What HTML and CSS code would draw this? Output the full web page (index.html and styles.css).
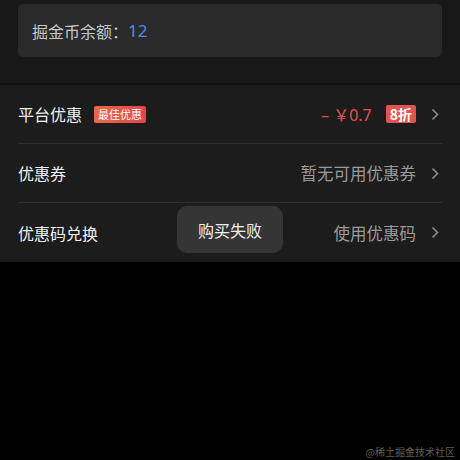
FILE: index.html
```html
<!DOCTYPE html>
<html>
  <head>
    <title>支付</title>
    <link rel="stylesheet" href="styles.css">
  </head>
  <body>

    <div class="balance-wrap">
      <div class="balance">掘金币余额：<span class="coin">12</span></div>
    </div>

    <div class="list">
      <div class="row">
        <span class="label">平台优惠</span>
        <span class="best">最佳优惠</span>
        <span class="value red">– ￥0.7</span>
        <span class="off">8折</span>
        <svg class="arrow" width="8" height="13" viewBox="0 0 8 13"><path d="M1.5 1.5 L6.5 6.5 L1.5 11.5" fill="none" stroke="#8b8b94" stroke-width="1.6"/></svg>
      </div>
      <div class="row">
        <span class="label">优惠券</span>
        <span class="value">暂无可用优惠券</span>
        <svg class="arrow" width="8" height="13" viewBox="0 0 8 13"><path d="M1.5 1.5 L6.5 6.5 L1.5 11.5" fill="none" stroke="#8b8b94" stroke-width="1.6"/></svg>
      </div>
      <div class="row">
        <span class="label">优惠码兑换</span>
        <span class="value">使用优惠码</span>
        <svg class="arrow" width="8" height="13" viewBox="0 0 8 13"><path d="M1.5 1.5 L6.5 6.5 L1.5 11.5" fill="none" stroke="#8b8b94" stroke-width="1.6"/></svg>
      </div>
    </div>

    <div class="toast">购买失败</div>
    <div class="mark">@稀土掘金技术社区</div>

  </body>
</html>
```

FILE: styles.css
```css
body {
  margin: 0;
  background-color: black;
  color: #e8e8e8;
  font-family: "Noto Sans CJK SC", "Noto Sans", sans-serif;
  width: 460px;
  height: 460px;
  position: relative;
  overflow: hidden;
}

.balance-wrap {
  background-color: #181818;
  padding: 4px 18px 26px 18px;
  border-bottom: 2px solid #121212;
}

.balance {
  background-color: #2a2a2a;
  border-radius: 5px;
  height: 53px;
  padding-left: 14px;
  display: flex;
  align-items: center;
  font-size: 16px;
  color: #c8c8c8;
}

.coin {
  color: #4d8ae6;
  font-family: "Noto Sans", sans-serif;
  font-size: 17px;
}

.list {
  background-color: #1c1c1c;
  padding: 0 18px;
}

.row {
  height: 58px;
  display: flex;
  align-items: center;
  border-bottom: 1px solid #2e2e2e;
  font-size: 16px;
}

.row:last-child {
  border-bottom: none;
  height: 59px;
}

.label {
  color: #f0f0f0;
}

.best {
  margin-left: 12px;
  font-size: 11px;
  color: white;
  padding: 0 4px;
  line-height: 17px;
  border-radius: 2px;
  background: linear-gradient(90deg, #ea6a4a, #e2454a);
}

.value {
  margin-left: auto;
  color: #9a9a9a;
  font-size: 16.5px;
}

.red {
  color: #e5524d;
  font-family: "Noto Sans", "Noto Sans CJK SC", sans-serif;
  font-size: 16px;
}

.off {
  margin-left: 14px;
  background-color: #e2544f;
  color: white;
  font-size: 14px;
  font-weight: bold;
  line-height: 18px;
  padding: 0 4px;
  border-radius: 2px;
}

.arrow {
  margin-left: 15px;
  margin-right: 3px;
}

.toast {
  position: absolute;
  left: 177px;
  top: 206px;
  width: 106px;
  height: 47px;
  border-radius: 10px;
  background-color: #353535;
  color: #f0f0f0;
  font-size: 16px;
  display: flex;
  align-items: center;
  justify-content: center;
}

.mark {
  position: absolute;
  right: 5px;
  bottom: 1px;
  font-size: 10px;
  color: #5e5e5e;
}
```
